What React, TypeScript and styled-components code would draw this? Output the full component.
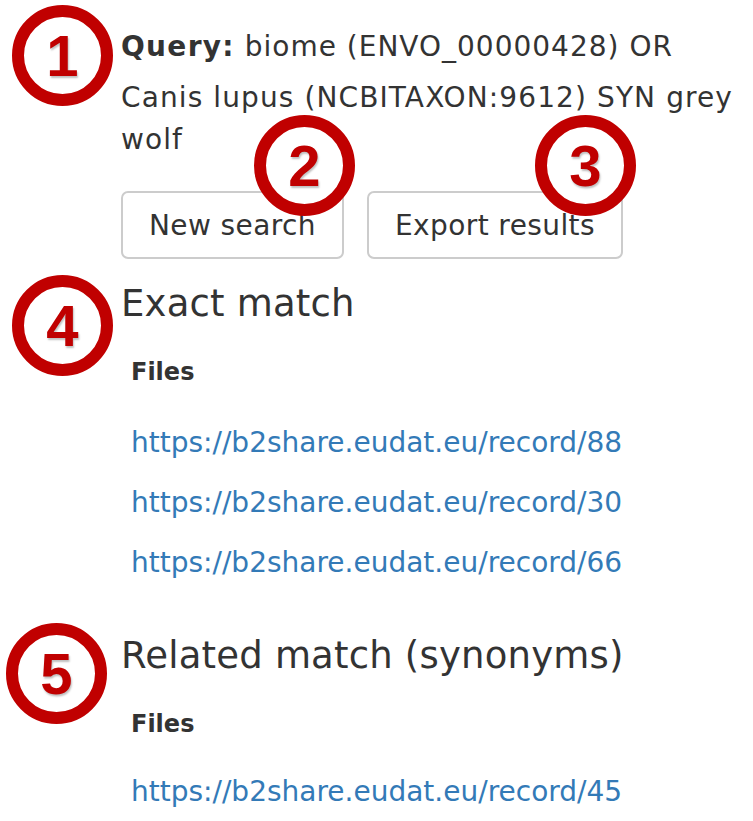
import React from "react";
import styled, { createGlobalStyle } from "styled-components";

const Global = createGlobalStyle`
  html, body { margin: 0; padding: 0; background: #fff; }
  body { font-family: "DejaVu Sans", Verdana, sans-serif; color: #333; }
`;

const Page = styled.div`
  position: relative;
  width: 753px;
  height: 821px;
  overflow: hidden;
  padding: 26px 0 0 121px;
  box-sizing: border-box;
  display: flex;
  flex-direction: column;
`;

const Query = styled.div`
  font-size: 28px;
  line-height: 42px;
  letter-spacing: 1.1px;
  width: 625px;
`;

const QueryFirst = styled.div`
  margin-bottom: 9px;
  white-space: nowrap;
  letter-spacing: 1px;
  strong { letter-spacing: 1.3px; }
`;

const Buttons = styled.div`
  display: flex;
  gap: 23px;
  margin: 30px 0 23px;
`;

const Button = styled.button`
  font-family: "DejaVu Sans", Verdana, sans-serif;
  font-size: 28px;
  letter-spacing: 0.4px;
  color: #333;
  background: #fff;
  border: 2px solid #ccc;
  border-radius: 7px;
  height: 68px;
  padding: 0 26px;
  box-sizing: border-box;
`;

const Section = styled.section<{ $gap: number }>`
  display: flex;
  flex-direction: column;
  margin-bottom: ${(p) => p.$gap}px;
`;

const Heading = styled.h3`
  font-size: 37px;
  font-weight: 400;
  line-height: 43px;
  letter-spacing: 0.2px;
  margin: 0 0 33px;
`;

const Files = styled.h4`
  font-size: 24px;
  font-weight: 700;
  line-height: 29px;
  margin: 0 0 0 10px;
`;

const LinkList = styled.div<{ $top: number }>`
  display: flex;
  flex-direction: column;
  padding: ${(p) => p.$top}px 0 0 10px;
`;

const Link = styled.a`
  font-size: 28px;
  line-height: 60px;
  color: #337ab7;
  text-decoration: none;
`;

const Badge = styled.div<{ $x: number; $y: number }>`
  position: absolute;
  left: ${(p) => p.$x - 50}px;
  top: ${(p) => p.$y - 50}px;
  width: 101px;
  height: 101px;
  box-sizing: border-box;
  border: 12px solid #c00000;
  border-radius: 50%;
  background: #fff;
  display: flex;
  align-items: center;
  justify-content: center;
  font-family: "Liberation Sans", Arial, sans-serif;
  font-weight: 700;
  font-size: 58px;
  color: #c00000;
  text-shadow: 1px 2px 2px rgba(0, 0, 0, 0.25);
`;

const links1 = [
  "https://b2share.eudat.eu/record/88",
  "https://b2share.eudat.eu/record/30",
  "https://b2share.eudat.eu/record/66",
];

const badges = [
  { n: 1, x: 62, y: 55 },
  { n: 2, x: 304, y: 165 },
  { n: 3, x: 585, y: 165 },
  { n: 4, x: 62, y: 325 },
  { n: 5, x: 56, y: 673 },
];

export default function App() {
  return (
    <>
      <Global />
      <Page>
        <Query>
          <QueryFirst>
            <strong>Query:</strong> biome (ENVO_00000428) OR
          </QueryFirst>
          <div>Canis lupus (NCBITAXON:9612) SYN grey wolf</div>
        </Query>
        <Buttons>
          <Button>New search</Button>
          <Button>Export results</Button>
        </Buttons>
        <Section $gap={41}>
          <Heading>Exact match</Heading>
          <Files>Files</Files>
          <LinkList $top={26}>
            {links1.map((l) => (
              <Link key={l} href="#">
                {l}
              </Link>
            ))}
          </LinkList>
        </Section>
        <Section $gap={0}>
          <Heading>Related match (synonyms)</Heading>
          <Files>Files</Files>
          <LinkList $top={23}>
            <Link href="#">https://b2share.eudat.eu/record/45</Link>
          </LinkList>
        </Section>
        {badges.map((b) => (
          <Badge key={b.n} $x={b.x} $y={b.y}>
            {b.n}
          </Badge>
        ))}
      </Page>
    </>
  );
}
